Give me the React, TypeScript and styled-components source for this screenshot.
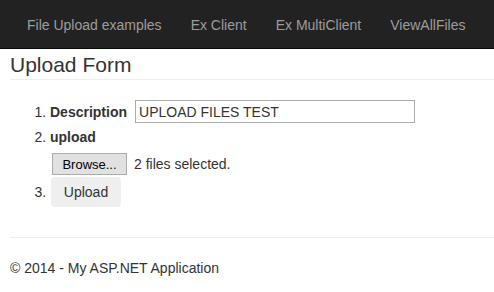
import React from "react";
import styled, { createGlobalStyle } from "styled-components";

const GlobalStyle = createGlobalStyle`
  html, body {
    margin: 0;
    padding: 0;
    background: #fff;
  }
  body {
    font-family: "Liberation Sans", Arial, Helvetica, sans-serif;
    font-size: 14px;
    line-height: 20px;
    color: #333;
  }
`;

const Navbar = styled.nav`
  height: 48px;
  background-color: #222;
  border-bottom: 1px solid #080808;
  display: flex;
  align-items: stretch;
  padding-left: 12px;
`;

const NavLink = styled.a`
  display: block;
  padding: 15px 14.5px;
  line-height: 20px;
  color: #9d9d9d;
  text-decoration: none;
  cursor: pointer;
  &:first-child {
    padding-left: 15px;
  }
  &:hover {
    color: #fff;
  }
`;

const Container = styled.div`
  padding: 0 0 0 10px;
`;

const Title = styled.h2`
  margin: 4px 0 0;
  padding-bottom: 3px;
  font-size: 21px;
  font-weight: 500;
  line-height: 23px;
  color: #333;
  border-bottom: 1px solid #eee;
`;

const FormList = styled.ol`
  margin: 20px 0 30px;
  padding-left: 40px;
`;

const Item = styled.li<{ gap?: number }>`
  margin-top: ${(props) => props.gap ?? 0}px;
`;

const Label = styled.label`
  font-weight: bold;
  margin-right: 8px;
`;

const TextInput = styled.input`
  box-sizing: border-box;
  width: 280px;
  height: 23px;
  padding: 1px 3px;
  margin: 0;
  border: 1px solid #ababab;
  font-family: inherit;
  font-size: 14px;
  color: #333;
  vertical-align: baseline;
  outline: none;
`;

const FileRow = styled.div`
  margin-top: 6px;
  display: flex;
  align-items: center;
  gap: 7px;
  height: 22px;
`;

const BrowseButton = styled.button`
  box-sizing: border-box;
  width: 75px;
  height: 22px;
  margin-left: 2px;
  padding: 0;
  border: 1px solid #adadad;
  background: #e1e1e1;
  font-family: "Liberation Sans", Arial, sans-serif;
  font-size: 13px;
  color: #000;
  cursor: pointer;
`;

const SubmitButton = styled.button`
  box-sizing: border-box;
  width: 70px;
  height: 30px;
  margin-left: 1px;
  padding: 5px 12px;
  border: none;
  border-radius: 4px;
  background: #efefef;
  font-family: inherit;
  font-size: 14px;
  line-height: 20px;
  color: #333;
  cursor: pointer;
`;

const Rule = styled.hr`
  margin: 0 0 20px;
  border: 0;
  border-top: 1px solid #eee;
`;

const Footer = styled.footer`
  p {
    margin: 0 0 10px;
  }
`;

export default function App() {
  return (
    <>
      <GlobalStyle />
      <Navbar>
        <NavLink>File Upload examples</NavLink>
        <NavLink>Ex Client</NavLink>
        <NavLink>Ex MultiClient</NavLink>
        <NavLink>ViewAllFiles</NavLink>
      </Navbar>
      <Container>
        <Title>Upload Form</Title>
        <FormList>
          <Item>
            <Label htmlFor="desc">Description</Label>
            <TextInput id="desc" defaultValue="UPLOAD FILES TEST" />
          </Item>
          <Item gap={4}>
            <Label>upload</Label>
            <FileRow>
              <BrowseButton type="button">Browse...</BrowseButton>
              <span>2 files selected.</span>
            </FileRow>
          </Item>
          <Item gap={2}>
            <SubmitButton type="submit">Upload</SubmitButton>
          </Item>
        </FormList>
        <Rule />
        <Footer>
          <p>&copy; 2014 - My ASP.NET Application</p>
        </Footer>
      </Container>
    </>
  );
}
